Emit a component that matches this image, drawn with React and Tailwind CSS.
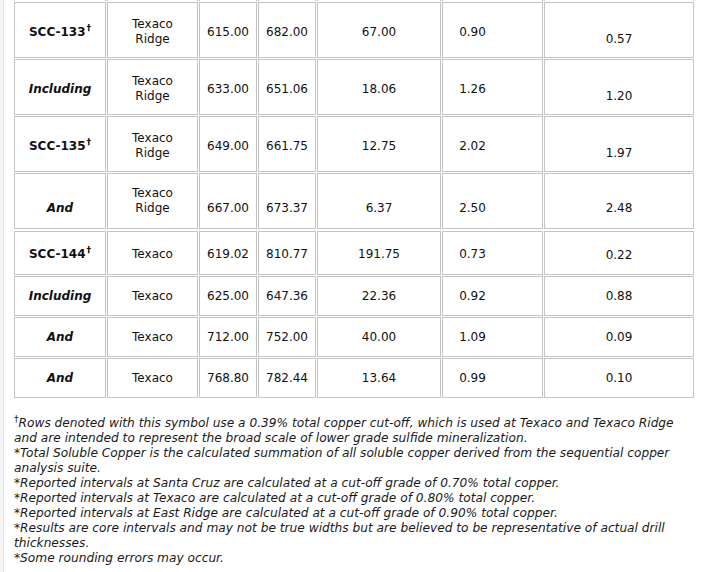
const COL_W = ['w-[92px]', 'w-[91px]', 'w-[58px]', 'w-[58px]', 'w-[124px]', 'w-[101px]', 'w-[150px]']

const UPPER = [
  { hole: 'SCC-133', dag: true, loc: ['Texaco', 'Ridge'], from: '615.00', to: '682.00', len: '67.00', tcu: '0.90', tscu: '0.57' },
  { hole: 'Including', loc: ['Texaco', 'Ridge'], from: '633.00', to: '651.06', len: '18.06', tcu: '1.26', tscu: '1.20' },
  { hole: 'SCC-135', dag: true, loc: ['Texaco', 'Ridge'], from: '649.00', to: '661.75', len: '12.75', tcu: '2.02', tscu: '1.97' },
  { hole: 'And', loc: ['Texaco', 'Ridge'], from: '667.00', to: '673.37', len: '6.37', tcu: '2.50', tscu: '2.48', bottom: true },
]

const LOWER = [
  { hole: 'SCC-144', dag: true, loc: ['Texaco'], from: '619.02', to: '810.77', len: '191.75', tcu: '0.73', tscu: '0.22' },
  { hole: 'Including', loc: ['Texaco'], from: '625.00', to: '647.36', len: '22.36', tcu: '0.92', tscu: '0.88' },
  { hole: 'And', loc: ['Texaco'], from: '712.00', to: '752.00', len: '40.00', tcu: '1.09', tscu: '0.09' },
  { hole: 'And', loc: ['Texaco'], from: '768.80', to: '782.44', len: '13.64', tcu: '0.99', tscu: '0.10' },
]

const cell = 'border border-[#c4c4c4] p-0 text-center'

function HoleName({ row }) {
  if (row.dag) {
    return (
      <span className="font-bold">
        {row.hole}
        <sup className="text-[9px] -top-[5px] ml-[1px]">†</sup>
      </span>
    )
  }
  return <span className="font-bold italic">{row.hole}</span>
}

// rows 1-3 up top sit their last value low, row 4 sits everything low
function UpperRow({ row }) {
  const v = row.bottom ? 'align-bottom pb-[12px]' : 'align-middle pt-[4px]'
  const loc = row.bottom ? 'align-middle' : 'align-middle pt-[4px]'
  const last = 'align-bottom pb-[10px]'
  return (
    <tr className="h-[56px]">
      <td className={`${cell} ${COL_W[0]} ${v}`}><HoleName row={row} /></td>
      <td className={`${cell} ${COL_W[1]} ${loc}`}>
        {row.loc[0]}<br />{row.loc[1]}
      </td>
      <td className={`${cell} ${COL_W[2]} ${v}`}>{row.from}</td>
      <td className={`${cell} ${COL_W[3]} ${v}`}>{row.to}</td>
      <td className={`${cell} ${COL_W[4]} ${v}`}>{row.len}</td>
      <td className={`${cell} ${COL_W[5]} ${v} pr-[40px]`}>{row.tcu}</td>
      <td className={`${cell} ${COL_W[6]} ${row.bottom ? v : last}`}>{row.tscu}</td>
    </tr>
  )
}

function LowerRow({ row, first }) {
  const v = first ? 'align-middle pt-[2px]' : 'align-middle'
  return (
    <tr className={first ? 'h-[44px]' : 'h-[40px]'}>
      <td className={`${cell} ${v}`}><HoleName row={row} /></td>
      <td className={`${cell} ${v}`}>{row.loc[0]}</td>
      <td className={`${cell} ${v}`}>{row.from}</td>
      <td className={`${cell} ${v}`}>{row.to}</td>
      <td className={`${cell} ${v}`}>{row.len}</td>
      <td className={`${cell} ${v} pr-[40px]`}>{row.tcu}</td>
      <td className={`${cell} ${first ? 'align-middle pt-[5px]' : 'align-middle'}`}>{row.tscu}</td>
    </tr>
  )
}

export default function App() {
  return (
    <div className="flex min-h-screen h-[572px] overflow-hidden bg-white font-['DejaVu_Sans',Verdana,sans-serif] text-[12px] leading-[15px] text-[#111]">
      <div className="w-[4px] shrink-0 bg-[#f5f5f5] border-r border-[#e4e4e4]" />

      <div className="flex-1 min-w-0">
        {/* upper table: the row above is cut off by the window */}
        <table className="ml-[9px] -mt-[10px] table-fixed border-separate border-spacing-[1px] w-[682px]">
          <tbody>
            <tr className="h-[10px]">
              {COL_W.map((w, i) => (
                <td key={i} className={`${w} p-0 border-x border-[#c4c4c4]`} />
              ))}
            </tr>
            {UPPER.map((r, i) => <UpperRow key={i} row={r} />)}
          </tbody>
        </table>

        <table className="ml-[9px] table-fixed border-separate border-spacing-[1px] w-[682px]">
          <colgroup>
            {COL_W.map((w, i) => <col key={i} className={w} />)}
          </colgroup>
          <tbody>
            {LOWER.map((r, i) => <LowerRow key={i} row={r} first={i === 0} />)}
          </tbody>
        </table>

        <p className="ml-[10px] mt-[17px] italic text-[12.2px] text-[#1a1a1a] whitespace-nowrap">
          <sup className="not-italic text-[9px] -top-[5px]">†</sup>Rows denoted with this symbol use a 0.39% total copper cut-off, which is used at Texaco and Texaco Ridge<br />
          and are intended to represent the broad scale of lower grade sulfide mineralization.<br />
          *Total Soluble Copper is the calculated summation of all soluble copper derived from the sequential copper<br />
          analysis suite.<br />
          *Reported intervals at Santa Cruz are calculated at a cut-off grade of 0.70% total copper.<br />
          *Reported intervals at Texaco are calculated at a cut-off grade of 0.80% total copper.<br />
          *Reported intervals at East Ridge are calculated at a cut-off grade of 0.90% total copper.<br />
          *Results are core intervals and may not be true widths but are believed to be representative of actual drill<br />
          thicknesses.<br />
          *Some rounding errors may occur.
        </p>
      </div>
    </div>
  )
}
